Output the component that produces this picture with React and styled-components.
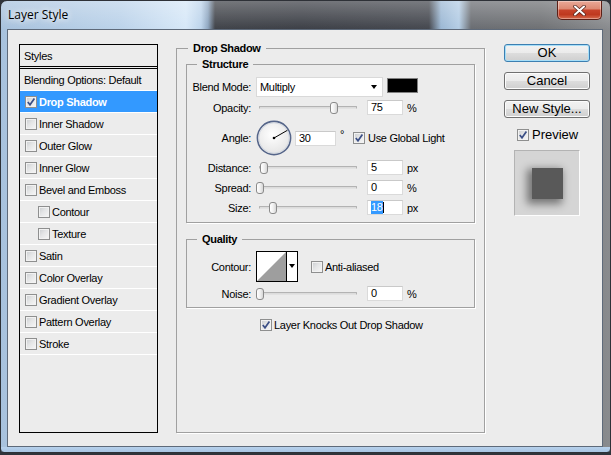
import React from "react";
import styled, { createGlobalStyle } from "styled-components";

const GlobalStyle = createGlobalStyle`
  html, body { margin: 0; padding: 0; }
  body {
    width: 611px;
    height: 455px;
    overflow: hidden;
    background: #30343b;
    font-family: "Liberation Sans", Arial, sans-serif;
    font-size: 11px;
    color: #000;
  }
  #root { width: 611px; height: 455px; }
`;

const Window = styled.div`
  box-sizing: border-box;
  width: 611px;
  height: 453px;
  border: 1px solid #2e3137;
  border-radius: 7px 7px 4px 4px;
  padding: 0 7px 5px 6px;
  display: flex;
  flex-direction: column;
  overflow: hidden;
  background:
    linear-gradient(to top, #a9c5e3 0, #b7d1ec 5px, rgba(0, 0, 0, 0) 5px),
    linear-gradient(to bottom, rgba(255, 255, 255, 0.28), rgba(255, 255, 255, 0) 28px),
    linear-gradient(
      to right,
      #a8c2dd 0,
      #bcd3ea 120px,
      #d7e8f8 185px,
      #bdd4eb 200px,
      #8ea6c0 207px,
      #404349 214px,
      #3d4047 300px,
      #45484f 428px,
      #9cb8d4 440px,
      #b4cde5 458px,
      #6a6d72 470px,
      #6f7174 540px,
      #8a8c8f 611px
    );
`;

const TitleBar = styled.div`
  display: flex;
  align-items: flex-start;
  justify-content: space-between;
  height: 28px;
  flex: none;
`;

const Title = styled.div`
  margin: 6px 0 0 1px;
  font-family: "Open Sans", "Noto Sans", sans-serif;
  font-size: 12px;
  line-height: 16px;
  color: #000;
  text-shadow: 0 0 6px rgba(255, 255, 255, 0.95), 0 0 10px rgba(255, 255, 255, 0.8);
`;

const CloseButton = styled.div`
  width: 45px;
  height: 19px;
  margin-right: 1px;
  box-sizing: border-box;
  border: 1px solid #5c1f16;
  border-top: none;
  border-radius: 0 0 5px 5px;
  background: linear-gradient(#eaa998 0%, #dd8a74 42%, #c7432a 52%, #bf391f 75%, #d66b4e 100%);
  box-shadow: inset 0 0 0 1px rgba(255, 255, 255, 0.35);
  display: flex;
  align-items: center;
  justify-content: center;
`;

const Client = styled.div`
  flex: 1;
  box-sizing: border-box;
  border: 1px solid #5e6a7a;
  background: #ececec;
  display: flex;
  align-items: flex-start;
  padding: 11px 0 0 11px;
`;

/* ---------- left list ---------- */

const StylesBox = styled.div`
  flex: none;
  width: 139px;
  height: 389px;
  box-sizing: border-box;
  border: 1px solid #000;
  margin-top: 3px;
  letter-spacing: -0.3px;
`;

const StylesHeader = styled.div`
  height: 21px;
  border-bottom: 3px double #000;
  padding-left: 4px;
  display: flex;
  align-items: center;
`;

const ListRow = styled.div`
  height: 21px;
  border-bottom: 1px solid #fff;
  display: flex;
  align-items: center;
  padding-left: ${(p) => p.$indent}px;
  background: ${(p) => (p.$selected ? "#3399ff" : "transparent")};
  color: ${(p) => (p.$selected ? "#fff" : "#000")};
  font-weight: ${(p) => (p.$selected ? "bold" : "normal")};
`;

const RowText = styled.span`
  margin-left: ${(p) => (p.$gap == null ? 2 : p.$gap)}px;
  white-space: nowrap;
`;

/* ---------- check box ---------- */

const Box = styled.span`
  flex: none;
  display: inline-flex;
  align-items: center;
  justify-content: center;
  width: 12px;
  height: 12px;
  box-sizing: border-box;
  border: 1px solid #8e8f8f;
  background: linear-gradient(135deg, #c9cccf 0%, #e4e5e6 45%, #f7f7f7 100%);
  box-shadow: inset 0 0 0 1px #f2f2f2;
`;

const CheckBox = ({ checked }) => (
  <Box>
    {checked && (
      <svg width="10" height="10" viewBox="0 0 10 10">
        <path d="M1.8 5 L4 7.8 L8.4 1.6" fill="none" stroke="#3b4f86" strokeWidth="1.7" />
      </svg>
    )}
  </Box>
);

/* ---------- groups ---------- */

const Group = styled.fieldset`
  margin: ${(p) => p.$m};
  padding: 0;
  border: 1px solid #a0a0a0;
  box-shadow: 1px 1px 0 #fff;
  min-width: 0;
  box-sizing: border-box;
  width: ${(p) => p.$w}px;
  height: ${(p) => (p.$h ? `${p.$h}px` : "auto")};
  flex: none;
`;

const Legend = styled.legend`
  margin-left: ${(p) => p.$ml}px;
  padding: 0 5px;
  font-weight: bold;
  font-size: 11px;
  line-height: 14px;
  letter-spacing: -0.3px;
`;

const Row = styled.div`
  display: flex;
  align-items: center;
  height: ${(p) => p.$h}px;
  margin-top: ${(p) => p.$mt}px;
  margin-left: ${(p) => p.$ml || 0}px;
  letter-spacing: -0.3px;
`;

const Label = styled.span`
  flex: none;
  width: 64px;
  margin-right: 5px;
  text-align: right;
  white-space: nowrap;
`;

const Select = styled.div`
  width: 127px;
  height: 20px;
  box-sizing: border-box;
  border: 1px solid #d9d9d9;
  background: #fff;
  display: flex;
  align-items: center;
  justify-content: space-between;
  padding: 0 5px 0 3px;
`;

const DownArrow = styled.span`
  width: 0;
  height: 0;
  border-left: 3.5px solid transparent;
  border-right: 3.5px solid transparent;
  border-top: 4px solid #000;
`;

const Swatch = styled.div`
  width: 31px;
  height: 15px;
  box-sizing: border-box;
  margin: 1px 0 0 4px;
  align-self: flex-start;
  background: #000;
  border: 1px solid #808080;
`;

const Slider = styled.div`
  position: relative;
  flex: none;
  width: 104px;
  height: 15px;
  padding-left: 3px;
  box-sizing: border-box;
  display: flex;
  align-items: center;
`;

const Track = styled.div`
  width: 98px;
  height: 3px;
  box-sizing: border-box;
  border: 1px solid #b3b3b3;
  border-bottom-color: #e2e2e2;
  background: #dcdcdc;
  border-radius: 1px;
`;

const Thumb = styled.div`
  position: absolute;
  top: 2px;
  left: ${(p) => p.$pos}px;
  width: 8px;
  height: 12px;
  box-sizing: border-box;
  border: 1px solid #8a8a8a;
  border-radius: 3px 3px 3px 3px;
  background: linear-gradient(to right, #ffffff 0%, #f1f1f1 50%, #d6d6d6 100%);
`;

const Field = styled.div`
  flex: none;
  width: ${(p) => p.$w || 36}px;
  height: 15px;
  box-sizing: border-box;
  margin-left: ${(p) => (p.$ml == null ? 7 : p.$ml)}px;
  border: 1px solid #dadada;
  border-top-color: #c9c9c9;
  background: #fff;
  padding-left: 3px;
  display: flex;
  align-items: center;
  line-height: 13px;
`;

const Selected = styled.span`
  background: #3399ff;
  color: #fff;
`;

const Caret = styled.span`
  width: 1px;
  height: 11px;
  background: #000;
`;

const Unit = styled.span`
  margin-left: 4px;
  white-space: nowrap;
`;

const Degree = styled.span`
  align-self: flex-start;
  margin: 8px 0 0 4px;
  width: 9px;
`;

const ContourPicker = styled.div`
  width: 42px;
  height: 31px;
  box-sizing: border-box;
  border: 1px solid #000;
  display: flex;
  background: #fff;
`;

const ContourThumb = styled.div`
  width: 29px;
  height: 100%;
  border-right: 1px solid #000;
  background: linear-gradient(to bottom right, #ffffff 49.5%, #9e9e9e 50.5%);
`;

const ContourArrow = styled.div`
  flex: 1;
  display: flex;
  align-items: center;
  justify-content: center;
  padding-bottom: 2px;
`;

const CheckLabel = styled.div`
  display: flex;
  align-items: center;
  margin-left: ${(p) => p.$ml || 0}px;
`;

/* ---------- right column ---------- */

const RightCol = styled.div`
  flex: none;
  width: 86px;
  margin: 3px 0 0 19px;
  display: flex;
  flex-direction: column;
`;

const Button = styled.button`
  width: 86px;
  height: 18px;
  box-sizing: border-box;
  margin: ${(p) => p.$mt}px 0 0 0;
  padding: 0;
  border: 1px solid ${(p) => (p.$default ? "#3c7fb1" : "#707070")};
  border-radius: 3px;
  background: linear-gradient(#f2f2f2 0%, #ebebeb 50%, #dddddd 51%, #cfcfcf 100%);
  box-shadow: inset 0 0 0 1px ${(p) => (p.$default ? "#a6def8" : "#fcfcfc")};
  font-family: "Liberation Sans", Arial, sans-serif;
  font-size: 13px;
  line-height: 16px;
  color: #000;
  text-align: center;
`;

const PreviewRow = styled.div`
  display: flex;
  align-items: center;
  margin: 9px 0 0 13px;
  font-size: 13px;
`;

const PreviewBox = styled.div`
  width: 66px;
  height: 66px;
  box-sizing: border-box;
  margin: 8px 0 0 10px;
  border: 1px solid;
  border-color: #b3b3b3 #fdfdfd #fdfdfd #b3b3b3;
  background: #d5d5d5;
  display: flex;
  align-items: center;
  justify-content: center;
`;

const PreviewSquare = styled.div`
  width: 31px;
  height: 31px;
  background: #595959;
  box-shadow: -3px 3px 8px 2px rgba(0, 0, 0, 0.45);
`;

/* ---------- pieces ---------- */

const Dial = () => (
  <svg width="36" height="36" viewBox="0 0 36 36" style={{ flex: "none" }}>
    <defs>
      <radialGradient id="dialFill" cx="45%" cy="40%" r="65%">
        <stop offset="0" stopColor="#ffffff" />
        <stop offset="1" stopColor="#e2e2e2" />
      </radialGradient>
    </defs>
    <circle cx="18" cy="18" r="16.6" fill="url(#dialFill)" stroke="#56668a" strokeWidth="1.6" />
    <circle cx="18" cy="18" r="15.2" fill="none" stroke="#cfd5df" strokeWidth="0.8" />
    <line x1="18" y1="18" x2="31.4" y2="10.3" stroke="#000" strokeWidth="1" />
    <circle cx="18" cy="18" r="1.3" fill="#000" />
  </svg>
);

const SliderField = ({ pos }) => (
  <Slider>
    <Track />
    <Thumb $pos={pos} />
  </Slider>
);

const styleItems = [
  { name: "Drop Shadow", checked: true, selected: true },
  { name: "Inner Shadow" },
  { name: "Outer Glow" },
  { name: "Inner Glow" },
  { name: "Bevel and Emboss" },
  { name: "Contour", sub: true },
  { name: "Texture", sub: true },
  { name: "Satin" },
  { name: "Color Overlay" },
  { name: "Gradient Overlay" },
  { name: "Pattern Overlay" },
  { name: "Stroke" },
];

export default function App() {
  return (
    <>
      <GlobalStyle />
      <Window>
        <TitleBar>
          <Title>Layer Style</Title>
          <CloseButton>
            <svg width="13" height="11" viewBox="0 0 13 11">
              <path d="M2 1.5 L11 9.5 M11 1.5 L2 9.5" stroke="#5a2a22" strokeWidth="3.6" strokeLinecap="round" />
              <path d="M2 1.5 L11 9.5 M11 1.5 L2 9.5" stroke="#ffffff" strokeWidth="2" strokeLinecap="round" />
            </svg>
          </CloseButton>
        </TitleBar>

        <Client>
          <StylesBox>
            <StylesHeader>Styles</StylesHeader>
            <ListRow $indent={4}>Blending Options: Default</ListRow>
            {styleItems.map((it) => (
              <ListRow key={it.name} $indent={it.sub ? 18 : 5} $selected={it.selected}>
                <CheckBox checked={it.checked} />
                <RowText>{it.name}</RowText>
              </ListRow>
            ))}
          </StylesBox>

          <Group $m="0 0 0 18px" $w={309} $h={392}>
            <Legend $ml={11}>Drop Shadow</Legend>

            <Group $m="2px 0 0 9px" $w={289}>
              <Legend $ml={10}>Structure</Legend>
              <Row $h={20} $mt={6}>
                <Label>Blend Mode:</Label>
                <Select>
                  <span>Multiply</span>
                  <DownArrow />
                </Select>
                <Swatch />
              </Row>
              <Row $h={15} $mt={3}>
                <Label>Opacity:</Label>
                <SliderField pos={74} />
                <Field>75</Field>
                <Unit>%</Unit>
              </Row>
              <Row $h={36} $mt={5}>
                <Label>Angle:</Label>
                <Dial />
                <Field $w={41} $ml={3}>30</Field>
                <Degree>°</Degree>
                <CheckLabel $ml={4}>
                  <CheckBox checked />
                  <RowText $gap={3}>Use Global Light</RowText>
                </CheckLabel>
              </Row>
              <Row $h={15} $mt={4}>
                <Label>Distance:</Label>
                <SliderField pos={4} />
                <Field>5</Field>
                <Unit>px</Unit>
              </Row>
              <Row $h={15} $mt={5}>
                <Label>Spread:</Label>
                <SliderField pos={0} />
                <Field>0</Field>
                <Unit>%</Unit>
              </Row>
              <Row $h={15} $mt={5} style={{ marginBottom: 7 }}>
                <Label>Size:</Label>
                <SliderField pos={13} />
                <Field>
                  <Selected>18</Selected>
                  <Caret />
                </Field>
                <Unit>px</Unit>
              </Row>
            </Group>

            <Group $m="9px 0 0 9px" $w={289}>
              <Legend $ml={10}>Quality</Legend>
              <Row $h={31} $mt={5}>
                <Label>Contour:</Label>
                <ContourPicker>
                  <ContourThumb />
                  <ContourArrow>
                    <DownArrow />
                  </ContourArrow>
                </ContourPicker>
                <CheckLabel $ml={13}>
                  <CheckBox />
                  <RowText $gap={2}>Anti-aliased</RowText>
                </CheckLabel>
              </Row>
              <Row $h={15} $mt={4} style={{ marginBottom: 6 }}>
                <Label>Noise:</Label>
                <SliderField pos={0} />
                <Field>0</Field>
                <Unit>%</Unit>
              </Row>
            </Group>

            <Row $h={13} $mt={10} $ml={83}>
              <CheckBox checked />
              <RowText $gap={2}>Layer Knocks Out Drop Shadow</RowText>
            </Row>
          </Group>

          <RightCol>
            <Button $default $mt={0}>OK</Button>
            <Button $mt={10}>Cancel</Button>
            <Button $mt={10}>New Style...</Button>
            <PreviewRow>
              <CheckBox checked />
              <RowText $gap={3}>Preview</RowText>
            </PreviewRow>
            <PreviewBox>
              <PreviewSquare />
            </PreviewBox>
          </RightCol>
        </Client>
      </Window>
    </>
  );
}
